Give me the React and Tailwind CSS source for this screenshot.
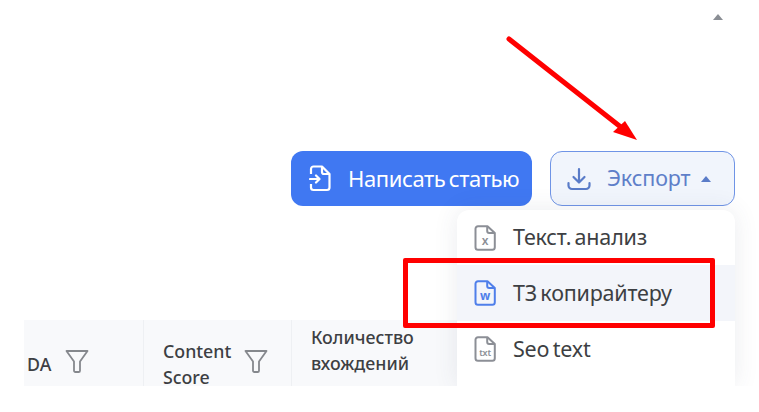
import React from "react";

const ui = { fontFamily: '"Noto Sans", Inter, sans-serif' };

function FileIcon({ label, color = "#8c8f96", active }) {
  return (
    <svg width="22" height="26" viewBox="0 0 22 26" fill="none" className="shrink-0">
      <path
        d="M4 1.2h9.5L20.8 8v14.3a2.5 2.5 0 0 1-2.5 2.5H4a2.5 2.5 0 0 1-2.5-2.5V3.7A2.5 2.5 0 0 1 4 1.2Z"
        stroke={color}
        strokeWidth="2"
        strokeLinejoin="round"
      />
      <path d="M13.200 1.500V6a2 2 0 0 0 2 2h5.300" stroke={color} strokeWidth="2" />
      <text
        x="11"
        y="19.500"
        textAnchor="middle"
        fontSize={label === "txt" ? 9 : 12}
        fontWeight={active ? 700 : 600}
        fill={color}
        fontFamily='"Noto Sans", sans-serif'
      >
        {label}
      </text>
    </svg>
  );
}

function FunnelIcon({ className }) {
  return (
    <svg width="24" height="25" viewBox="0 0 24 25" fill="none" className={`shrink-0 ${className}`}>
      <path
        d="M1.500 2h21L15 12.500v9.200a1.300 1.300 0 0 1-1.300 1.300h-3.400A1.300 1.300 0 0 1 9 21.700v-9.200L1.500 2Z"
        stroke="#85888d"
        strokeWidth="1.800"
        strokeLinejoin="round"
      />
    </svg>
  );
}

function MenuItem({ label, text, active, className }) {
  return (
    <div className={`flex items-center gap-[17px] pl-[17px] text-[21.500px] tracking-[-0.2px] [word-spacing:-2px] ${className} ${active ? "bg-[#f3f5fa]" : ""}`}>
      <FileIcon label={label} active={active} color={active ? "#4f7fea" : "#8c8f96"} />
      <span className="text-[#3d3f43]">{text}</span>
    </div>
  );
}

function HeaderCell({ className, children }) {
  return <div className={`flex items-center h-[88px] ${className}`}>{children}</div>;
}

export default function App() {
  return (
    <div className="relative w-[759px] h-[412px] overflow-hidden bg-white" style={ui}>
      {/* caret at the very top */}
      <div className="flex justify-end pt-[14px] pr-[36px] h-[151px]">
        <div className="w-0 h-0 border-x-[5px] border-x-transparent border-b-[6px] border-b-[#8a8e94]" />
      </div>

      {/* buttons */}
      <div className="flex justify-end gap-[18px] pr-[24px] h-[55px]">
        <button className="flex items-center w-[241px] pl-[18px] gap-[17px] rounded-xl bg-[#4078f2] text-white text-[22px] tracking-[-0.4px] [word-spacing:-2px]">
          <svg width="22" height="27" viewBox="0 0 22 27" fill="none">
            <path
              d="M2 9V4a2.500 2.500 0 0 1 2.500-2.500h8.500L20.500 9v13.500A2.500 2.500 0 0 1 18 25H4.500A2.500 2.500 0 0 1 2 22.500V19"
              stroke="white"
              strokeWidth="2.200"
              strokeLinejoin="round"
            />
            <path d="M13 2v5a2 2 0 0 0 2 2h5M1 14h9M7 10.500l3.500 3.500L7 17.500" stroke="white" strokeWidth="2.200" strokeLinecap="round" strokeLinejoin="round" />
          </svg>
          Написать статью
        </button>
        <button className="flex items-center w-[185px] pl-[16px] rounded-xl border-[1.500px] border-[#6f94e6] bg-[#f1f5fc] text-[#5f7fc9] text-[21.500px] tracking-[-0.1px]">
          <svg width="24" height="24" viewBox="0 0 24 24" fill="none" stroke="#5a7cc8" strokeWidth="2.200" strokeLinecap="round" strokeLinejoin="round">
            <path d="M12 2v13M6.500 10l5.500 5.500 5.500-5.500M1.500 16v2.500a3.500 3.500 0 0 0 3.500 3.500h14a3.500 3.500 0 0 0 3.500-3.500V16" />
          </svg>
          <span className="ml-[16px]">Экспорт</span>
          <span className="ml-[11px] w-0 h-0 border-x-[5.500px] border-x-transparent border-b-[6px] border-b-[#5a7cc8]" />
        </button>
      </div>

      {/* table header, the white strip below covers its lower edge */}
      <div className="mt-[114px] ml-[24px] mr-[24px] h-[70px] flex bg-[#f8f9fb] text-[17.800px] leading-[26px] text-[#3d3f43] font-medium">
        <HeaderCell className="w-[120px] pl-[3px] gap-[14px] border-r border-[#eef0f3]">
          <span>DA</span>
          <FunnelIcon className="mb-[6px]" />
        </HeaderCell>
        <HeaderCell className="w-[148px] pl-[19px] gap-[13px] border-r border-[#eef0f3]">
          <span className="pb-[1px]">Content<br />Score</span>
          <FunnelIcon className="mb-[6px]" />
        </HeaderCell>
        <HeaderCell className="pl-[19px]">
          <span className="pb-[28px]">Количество<br />вхождений</span>
        </HeaderCell>
      </div>

      {/* export dropdown */}
      <div className="absolute left-[457px] top-[210px] w-[278px] h-[176px] rounded-t-xl bg-white shadow-[0_0_24px_rgba(60,70,100,0.10)] overflow-hidden">
        <MenuItem label="x" text="Текст. анализ" className="h-[55px]" />
        <MenuItem label="w" text="ТЗ копирайтеру" active className="h-[56px]" />
        <MenuItem label="txt" text="Seo text" className="h-[56px]" />
      </div>
      <div className="absolute left-0 top-[386px] w-full h-[26px] bg-white" />

      {/* red annotations over the screenshot */}
      <div className="absolute left-[403px] top-[258px] w-[312px] h-[70px] border-[5px] border-[#ff0000] rounded-[2px]" />
      <svg className="absolute left-0 top-0" width="759" height="412" fill="none">
        <path d="M509 39 L622 128" stroke="#ff0000" strokeWidth="5" strokeLinecap="round" />
        <path d="M637 140 L613 132 L625 121 Z" fill="#ff0000" />
      </svg>
    </div>
  );
}
